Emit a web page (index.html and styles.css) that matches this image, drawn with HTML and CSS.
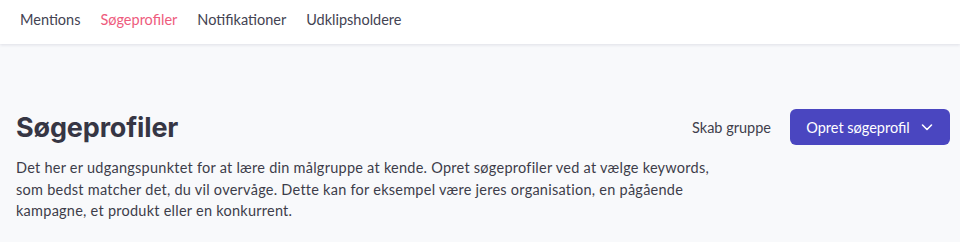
FILE: index.html
```html
<!DOCTYPE html>
<html lang="da">
<head>
<meta charset="utf-8">
<link rel="stylesheet" href="styles.css">
</head>
<body>
<nav class="tabs">
  <a class="tab">Mentions</a>
  <a class="tab active">Søgeprofiler</a>
  <a class="tab">Notifikationer</a>
  <a class="tab">Udklipsholdere</a>
</nav>
<main class="page">
  <header class="head">
    <h1 class="title">Søgeprofiler</h1>
    <div class="actions">
      <button class="link-btn">Skab gruppe</button>
      <button class="primary-btn">Opret søgeprofil
        <svg class="chev" width="14" height="14" viewBox="0 0 14 14"><path d="M2.5 5 L7 9.5 L11.5 5" fill="none" stroke="#fff" stroke-width="1.6" stroke-linecap="round" stroke-linejoin="round"/></svg>
      </button>
    </div>
  </header>
  <p class="intro">Det her er udgangspunktet for at lære din målgruppe at kende. Opret søgeprofiler ved at vælge keywords, som bedst matcher det, du vil overvåge. Dette kan for eksempel være jeres organisation, en pågående kampagne, et produkt eller en konkurrent.</p>
</main>
</body>
</html>
```
FILE: styles.css
```css
* { box-sizing: border-box; }
html, body { margin: 0; height: 100%; }
body {
  background: #f8f9fb;
  font-family: "Lato", "Open Sans", sans-serif;
  color: #3b3b48;
}
.tabs {
  height: 44px;
  background: #fff;
  display: flex;
  align-items: center;
  gap: 20px;
  padding: 0 20px 5px;
  box-shadow: 0 1px 3px rgba(40, 40, 80, 0.12);
  position: relative;
}
.tab {
  font-size: 14.5px;
  color: #434352;
  cursor: pointer;
}
.tab.active { color: #ee5b7d; }
.page { padding: 65px 10px 0 16px; }
.head {
  display: flex;
  align-items: center;
  justify-content: space-between;
}
.title {
  margin: 0;
  font-family: "Inter", sans-serif;
  font-weight: 700;
  font-size: 27px;
  color: #363644;
  letter-spacing: -0.15px;
}
.actions { display: flex; align-items: center; gap: 19px; }
.link-btn {
  background: none;
  border: 0;
  font: inherit;
  font-size: 14.5px;
  color: #3f3f4c;
  padding: 0;
}
.primary-btn {
  height: 36px;
  width: 160px;
  border: 0;
  border-radius: 6px;
  background: #4a46c0;
  color: #fff;
  font: inherit;
  font-size: 14.5px;
  display: flex;
  align-items: center;
  justify-content: center;
  gap: 10px;
  padding: 0 12px;
}
.chev { display: block; }
.intro {
  margin: 12px 0 0;
  max-width: 715px;
  font-size: 14.5px;
  letter-spacing: 0.25px;
  line-height: 21.5px;
  color: #3d3d4a;
}
```
